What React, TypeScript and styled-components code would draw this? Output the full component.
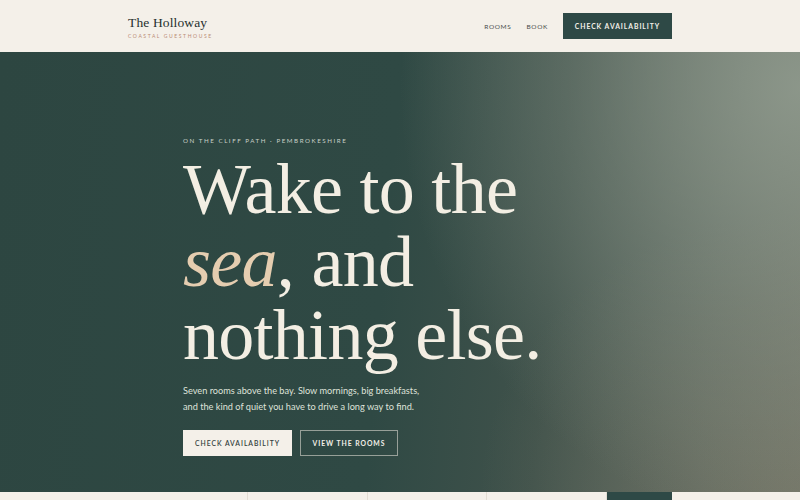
import React from "react";
import styled, { createGlobalStyle } from "styled-components";

const Global = createGlobalStyle`
  html, body { margin: 0; padding: 0; }
  body { background: #f4f0e9; font-family: "Lato", "Noto Sans", sans-serif; overflow: hidden; }
  * { box-sizing: border-box; }
`;

const Page = styled.div`
  width: 800px;
  height: 500px;
  overflow: hidden;
  display: flex;
  flex-direction: column;
`;

const Nav = styled.header`
  height: 52px;
  flex: 0 0 52px;
  background: #f4f0e9;
  display: flex;
  align-items: center;
  justify-content: space-between;
  padding: 0 128px;
`;

const Brand = styled.div`
  display: flex;
  flex-direction: column;
  gap: 3px;
  padding-top: 2px;
`;

const BrandName = styled.span`
  font-family: "Liberation Serif", serif;
  font-size: 13.5px;
  line-height: 15px;
  color: #27302e;
  letter-spacing: 0.01em;
`;

const BrandTag = styled.span`
  font-family: "Lato", sans-serif;
  font-size: 5px;
  line-height: 6px;
  letter-spacing: 0.32em;
  color: #b98a74;
  text-transform: uppercase;
`;

const NavRight = styled.nav`
  display: flex;
  align-items: center;
  gap: 15px;
`;

const NavLink = styled.a`
  font-family: "Lato", sans-serif;
  font-size: 6.5px;
  letter-spacing: 0.1em;
  color: #4a4f4c;
  text-transform: uppercase;
  text-decoration: none;
`;

const Button = styled.a<{ $variant: "dark" | "light" | "outline"; $w: number }>`
  display: inline-flex;
  align-items: center;
  justify-content: center;
  height: 26px;
  width: ${(p) => p.$w}px;
  font-family: "Lato", sans-serif;
  font-size: 6.8px;
  letter-spacing: 0.14em;
  text-transform: uppercase;
  text-decoration: none;
  background: ${(p) => (p.$variant === "dark" ? "#2e4946" : p.$variant === "light" ? "#f4f0e9" : "transparent")};
  color: ${(p) => (p.$variant === "light" ? "#33403d" : "#f4f0e9")};
  border: ${(p) => (p.$variant === "outline" ? "1px solid rgba(236,232,222,0.55)" : "none")};
  font-weight: ${(p) => (p.$variant === "light" ? 600 : 700)};
`;

const Hero = styled.section`
  flex: 0 0 440px;
  height: 440px;
  padding: 84px 183px 0;
  background:
    radial-gradient(ellipse 400px 440px at 100% 8%, rgba(146, 157, 144, 0.85) 0%, rgba(146, 157, 144, 0.4) 50%, rgba(146, 157, 144, 0) 100%),
    radial-gradient(ellipse 320px 280px at 100% 100%, rgba(122, 121, 104, 0.6), rgba(122, 121, 104, 0) 100%),
    linear-gradient(95deg, #2d4641 0%, #2f4944 48%, #40524b 68%, #5d685f 88%, #6c7267 100%);
  display: flex;
  flex-direction: column;
  align-items: flex-start;
`;

const Eyebrow = styled.p`
  margin: 0 0 8px;
  font-family: "Lato", sans-serif;
  font-size: 6.2px;
  line-height: 9px;
  letter-spacing: 0.25em;
  color: #c9d0c7;
  text-transform: uppercase;
`;

const Headline = styled.h1`
  margin: 0;
  font-family: "Liberation Serif", serif;
  font-weight: 400;
  font-size: 72px;
  line-height: 73px;
  letter-spacing: -0.01em;
  color: #f3eee3;
`;

const Accent = styled.em`
  font-style: italic;
  color: #e5cdb0;
`;

const Lede = styled.p`
  margin: 11px 0 15px;
  font-family: "Lato", sans-serif;
  font-size: 9.2px;
  line-height: 16px;
  color: #dfe2da;
`;

const Actions = styled.div`
  display: flex;
  gap: 8px;
`;

const BookingBar = styled.div`
  flex: 0 0 60px;
  background: #f4f0e9;
  padding: 0 128px;
  display: grid;
  grid-template-columns: repeat(4, 1fr) 65px;
`;

const Field = styled.div`
  border-right: 1px solid #e3ddd3;
`;

const BarButton = styled.div`
  background: #2e4946;
`;

export default function App() {
  return (
    <Page>
      <Global />
      <Nav>
        <Brand>
          <BrandName>The Holloway</BrandName>
          <BrandTag>Coastal Guesthouse</BrandTag>
        </Brand>
        <NavRight>
          <NavLink>Rooms</NavLink>
          <NavLink>Book</NavLink>
          <Button $variant="dark" $w={109}>Check Availability</Button>
        </NavRight>
      </Nav>
      <Hero>
        <Eyebrow>On the cliff path · Pembrokeshire</Eyebrow>
        <Headline>
          Wake to the
          <br />
          <Accent>sea</Accent>, and
          <br />
          nothing else.
        </Headline>
        <Lede>
          Seven rooms above the bay. Slow mornings, big breakfasts,
          <br />
          and the kind of quiet you have to drive a long way to find.
        </Lede>
        <Actions>
          <Button $variant="light" $w={109}>Check Availability</Button>
          <Button $variant="outline" $w={98}>View the Rooms</Button>
        </Actions>
      </Hero>
      <BookingBar>
        <Field />
        <Field />
        <Field />
        <Field />
        <BarButton />
      </BookingBar>
    </Page>
  );
}
